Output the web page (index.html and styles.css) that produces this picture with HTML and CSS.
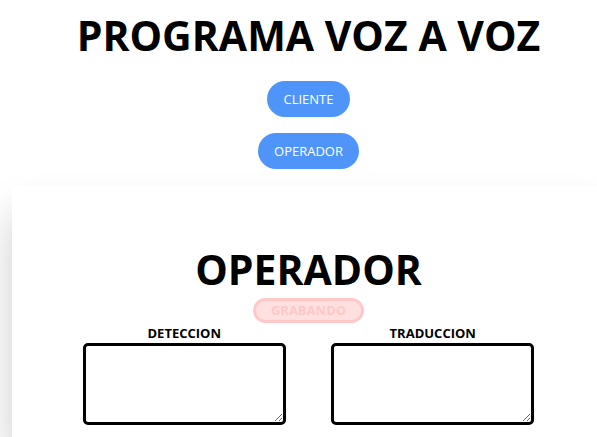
FILE: index.html
```html
<!DOCTYPE html>
<html lang="es">
<head>
<meta charset="utf-8">
<title>Programa voz a voz</title>
<link rel="stylesheet" href="styles.css">
</head>
<body>
<main class="page">
  <h1 class="title">PROGRAMA VOZ A VOZ</h1>
  <nav class="roles">
    <button class="role" type="button">CLIENTE</button>
    <button class="role" type="button">OPERADOR</button>
  </nav>
  <section class="panel">
    <h2 class="title">OPERADOR</h2>
    <p class="status">GRABANDO</p>
    <div class="fields">
      <div class="field">
        <label for="deteccion">DETECCION</label>
        <textarea id="deteccion"></textarea>
      </div>
      <div class="field">
        <label for="traduccion">TRADUCCION</label>
        <textarea id="traduccion"></textarea>
      </div>
    </div>
  </section>
</main>
</body>
</html>
```
FILE: styles.css
```css
* {
  box-sizing: border-box;
}

body {
  margin: 0;
  background: #fff;
  color: #000;
  font-family: "Segoe UI", "Open Sans", "Noto Sans", sans-serif;
  overflow-x: hidden;
}

.page {
  margin-left: 12px;
  margin-right: -8px;
  padding-top: 8px;
}

.title {
  margin: 0;
  font-size: 41px;
  line-height: 54px;
  font-weight: 700;
  text-align: center;
}

.roles {
  display: flex;
  flex-direction: column;
  align-items: center;
  gap: 16px;
  padding: 19px 0 17px;
}

.role {
  height: 36px;
  padding: 0 16px;
  border: 0;
  border-radius: 18px;
  background: #4f95f9;
  color: #fff;
  font: 400 13px/20px "Segoe UI", "Open Sans", "Noto Sans", sans-serif;
}

.panel {
  padding: 56px 48px 12px;
  box-shadow: 0 28px 40px rgba(0, 0, 0, 0.2);
  text-align: center;
}

.status {
  width: 111px;
  margin: 2px auto 0;
  border: 3px solid #ffc8c8;
  border-radius: 13px;
  background: #ffe0e0;
  color: #ffc8c8;
  font-size: 13px;
  line-height: 19px;
  font-weight: 700;
}

.fields {
  display: grid;
  grid-template-columns: 1fr 1fr;
}

.field {
  display: flex;
  flex-direction: column;
  align-items: center;
  font-size: 13px;
  line-height: 20px;
  font-weight: 700;
}

.field textarea {
  width: 203px;
  height: 82px;
  border: 3px solid #000;
  border-radius: 5px;
  background: #fff;
}
```
